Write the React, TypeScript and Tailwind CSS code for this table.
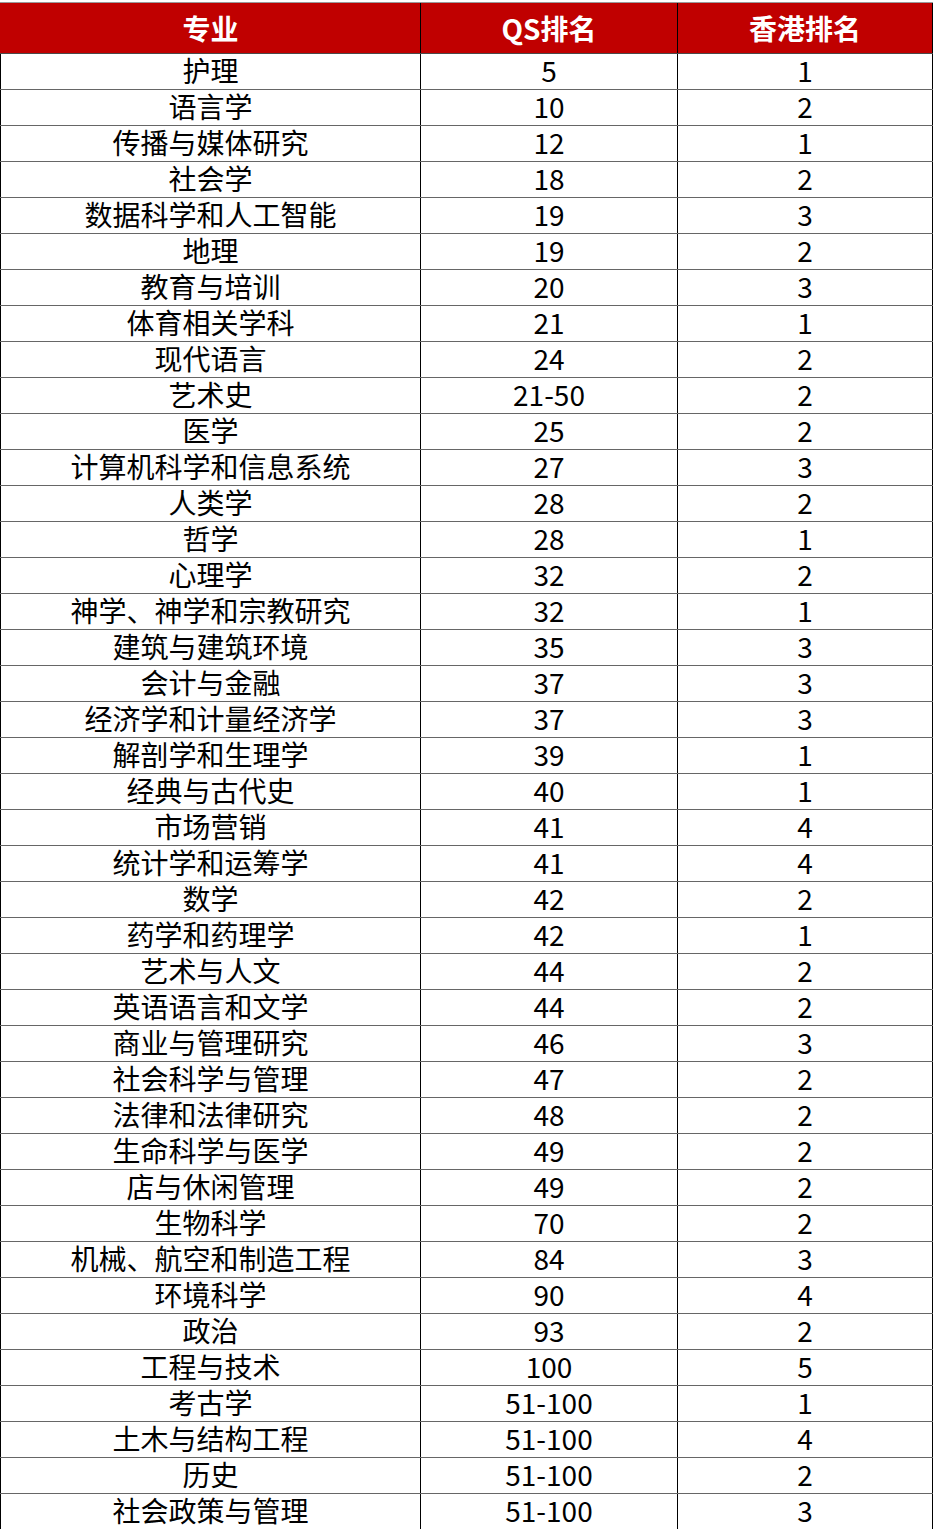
const rows: [string, string, string][] = [
  ["护理", "5", "1"],
  ["语言学", "10", "2"],
  ["传播与媒体研究", "12", "1"],
  ["社会学", "18", "2"],
  ["数据科学和人工智能", "19", "3"],
  ["地理", "19", "2"],
  ["教育与培训", "20", "3"],
  ["体育相关学科", "21", "1"],
  ["现代语言", "24", "2"],
  ["艺术史", "21-50", "2"],
  ["医学", "25", "2"],
  ["计算机科学和信息系统", "27", "3"],
  ["人类学", "28", "2"],
  ["哲学", "28", "1"],
  ["心理学", "32", "2"],
  ["神学、神学和宗教研究", "32", "1"],
  ["建筑与建筑环境", "35", "3"],
  ["会计与金融", "37", "3"],
  ["经济学和计量经济学", "37", "3"],
  ["解剖学和生理学", "39", "1"],
  ["经典与古代史", "40", "1"],
  ["市场营销", "41", "4"],
  ["统计学和运筹学", "41", "4"],
  ["数学", "42", "2"],
  ["药学和药理学", "42", "1"],
  ["艺术与人文", "44", "2"],
  ["英语语言和文学", "44", "2"],
  ["商业与管理研究", "46", "3"],
  ["社会科学与管理", "47", "2"],
  ["法律和法律研究", "48", "2"],
  ["生命科学与医学", "49", "2"],
  ["店与休闲管理", "49", "2"],
  ["生物科学", "70", "2"],
  ["机械、航空和制造工程", "84", "3"],
  ["环境科学", "90", "4"],
  ["政治", "93", "2"],
  ["工程与技术", "100", "5"],
  ["考古学", "51-100", "1"],
  ["土木与结构工程", "51-100", "4"],
  ["历史", "51-100", "2"],
  ["社会政策与管理", "51-100", "3"],
]

export default function App() {
  return (
    <div
      className="w-[933px] bg-white pt-[2px]"
      style={{ fontFamily: '"Noto Sans CJK SC", "Noto Sans", sans-serif' }}
    >
      <div className="border-t border-[#9a9a9a]">
        {/* header */}
        <div className="grid grid-cols-[420px_257px_256px] h-[51px] bg-[#c00000] border-b border-[#4a4a4a] text-white font-bold text-[28px] leading-[32px]">
          <div className="flex items-center justify-center border-l border-[#c00000]">专业</div>
          <div className="flex items-center justify-center border-l border-black">QS排名</div>
          <div className="flex items-center justify-center border-l border-black border-r">香港排名</div>
        </div>

        {rows.map(([name, qs, hk], i) => (
          <div
            key={i}
            className="grid grid-cols-[420px_257px_256px] h-[36px] border-b border-[#666] text-black text-[28px] leading-[30px]"
          >
            <div className="flex items-center justify-center pb-[3px] border-l border-black">{name}</div>
            <div className="flex items-center justify-center pb-[3px] border-l border-black">{qs}</div>
            <div className="flex items-center justify-center pb-[3px] border-l border-r border-black">{hk}</div>
          </div>
        ))}
      </div>
    </div>
  )
}
